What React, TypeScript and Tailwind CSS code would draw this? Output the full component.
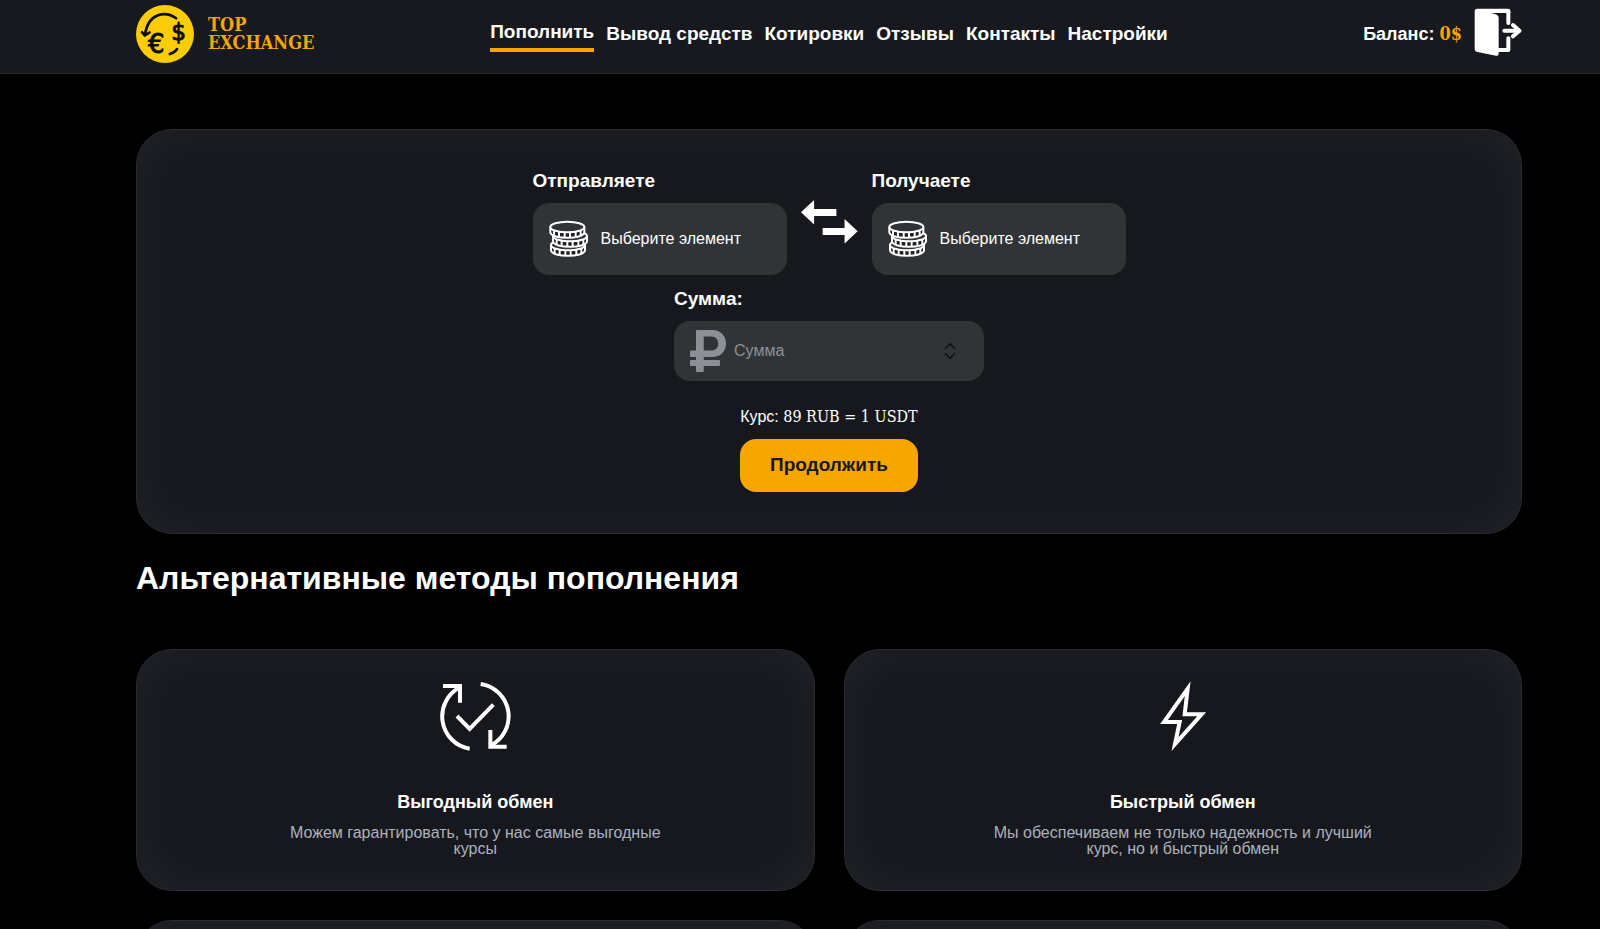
import React, { useState } from 'react';
import { FaRubleSign } from 'react-icons/fa';
import { ChevronDown, ChevronUp } from 'lucide-react';

interface NavItem {
  label: string;
  href: string;
}

interface Feature {
  title: string;
  text: string;
  icon: React.ReactNode;
}

const LogoIcon = () => (
  <svg className="w-[58px] h-[58px]" viewBox="47 13 175 175" fill="none" stroke="#0c0d10" strokeWidth="8" strokeLinecap="round" strokeLinejoin="round">
    <circle cx="134.5" cy="100.5" r="87.5" fill="#fccc06" stroke="none" />
    <path d="M168 53C138 31 84 34 74 103" />
    <path d="M65 95L74 105L88 96" />
    <path d="M149 161C158 159 166 153 171 146" />
    <g fill="#0c0d10" strokeWidth="3" fontWeight="400" fontFamily="DejaVu Sans, sans-serif">
      <text x="83" y="158" fontSize="78">€</text>
      <text x="153" y="119" fontSize="70">$</text>
    </g>
  </svg>
);

const ExitIcon = () => (
  <svg className="w-12 h-12" viewBox="404 22 144 144" fill="none" stroke="#fff" strokeWidth="12" strokeLinejoin="round">
    <path d="M406 32Q406 24 414 24H506Q513 24 513 31V37H454Q478 41 478 50V160Q478 167 470 165L411 153Q406 152 406 146Z" fill="#fff" stroke="none" />
    <path d="M507 32V67M507 113V148H478" strokeLinecap="round" />
    <path d="M495 90H540" strokeLinecap="round" />
    <path d="M521 73L540 90L521 107" strokeLinecap="round" />
  </svg>
);

// One coin of the stack, (x, y) is the centre of its top face
const Coin: React.FC<{ x: number; y: number }> = ({ x, y }) => (
  <g transform={`translate(${x} ${y})`} stroke="#fff" strokeWidth="6">
    <path d="M-51 0V16C-48 38 48 38 51 16V0" fill="#1d1f23" />
    <path d="M-40 9V26M-25 12V29M-8 14V32M8 14V32M25 12V29M40 9V26" />
    <ellipse rx="51" ry="16" fill="#313437" />
  </g>
);

const CoinsIcon = () => (
  <svg className="w-10 h-[38px] shrink-0" viewBox="115 182 120 114" fill="none">
    <Coin x={172} y={257} />
    <Coin x={178} y={230} />
    <Coin x={170} y={203} />
  </svg>
);

const SwapIcon = () => (
  <svg className="w-[57px] h-11" viewBox="60 120 174 134" fill="#fff">
    <path d="M60 157L100 120V147H168V169H100V195Z" />
    <path d="M233 215L193 178V205H126V227H193V253Z" />
  </svg>
);

const RefreshCheckIcon = () => (
  <svg className="w-[72px] h-[72px]" viewBox="508 60 216 216" fill="none" stroke="#fff" strokeWidth="12">
    <path d="M571 82A98 98 0 0 0 600 266" />
    <path d="M633 72A98 98 0 0 1 662 257" />
    <path d="M520 78H571V128" />
    <path d="M662 210V260H711" />
    <path d="M562 168L600 207L671 134" />
  </svg>
);

const BoltIcon = () => (
  <svg className="w-[72px] h-[72px]" viewBox="530 60 216 216" fill="none" stroke="#fff" strokeWidth="12" strokeMiterlimit="10">
    <path d="M652 86L581 186H628L614 252L694 163H643L652 86Z" />
  </svg>
);

const navItems: NavItem[] = [
  { label: 'Пополнить', href: '#deposit' },
  { label: 'Вывод средств', href: '#withdraw' },
  { label: 'Котировки', href: '#quotes' },
  { label: 'Отзывы', href: '#reviews' },
  { label: 'Контакты', href: '#contacts' },
  { label: 'Настройки', href: '#settings' }
];

const features: Feature[] = [
  {
    title: 'Выгодный обмен',
    text: 'Можем гарантировать, что у нас самые выгодные курсы',
    icon: <RefreshCheckIcon />
  },
  {
    title: 'Быстрый обмен',
    text: 'Мы обеспечиваем не только надежность и лучший курс, но и быстрый обмен',
    icon: <BoltIcon />
  }
];

const Card: React.FC<{ className?: string; children?: React.ReactNode }> = ({ className = '', children }) => (
  <div
    className={`rounded-[36px] border border-[#2b2c30] bg-[#17181d] shadow-[inset_0_0_60px_rgba(255,255,255,0.05)] ${className}`}
  >
    {children}
  </div>
);

const CurrencySelect: React.FC<{ id: string; label: string }> = ({ id, label }) => (
  <div className="flex flex-col gap-3">
    <label htmlFor={id} className="text-[19px] leading-5 font-bold">{label}</label>
    <div className="flex items-center gap-3 w-[254px] h-[72px] px-4 rounded-2xl bg-[#313437]">
      <CoinsIcon />
      <select id={id} className="flex-1 min-w-0 appearance-none bg-transparent text-base outline-none">
        <option>Выберите элемент</option>
      </select>
    </div>
  </div>
);

const Header = () => (
  <header className="bg-[#17191e] border-b border-[#2a2b2e]">
    <div className="grid grid-cols-[1fr_auto_1fr] items-center h-[73px] pb-[6px] pl-[136px] pr-[78px]">
      <a href="#home" className="flex items-center gap-[14px] font-['DejaVu_Serif_Condensed','DejaVu_Serif',serif] font-bold text-lg leading-[18px] text-[#f7a600]">
        <LogoIcon />
        <span>
          TOP
          <br />
          EXCHANGE
        </span>
      </a>
      <nav className="flex items-center gap-3 text-[19px] leading-6 font-bold">
        {navItems.map((item, index) => (
          <a
            key={item.href}
            href={item.href}
            className={index === 0 ? 'border-b-4 border-[#f7a600] py-1' : ''}
          >
            {item.label}
          </a>
        ))}
      </nav>
      <div className="flex items-center justify-end gap-3">
        <span className="text-lg leading-6 font-bold">
          Баланс:{' '}
          <span className="font-['DejaVu_Serif_Condensed','DejaVu_Serif',serif] text-[#f7a600]">0$</span>
        </span>
        <button className="pb-1" aria-label="Выйти">
          <ExitIcon />
        </button>
      </div>
    </div>
  </header>
);

const ExchangeForm = () => {
  const [amount, setAmount] = useState('');

  const step = (delta: number) => setAmount(value => String(Math.max(0, Number(value) + delta)));

  return (
    <Card className="py-[41px]">
      <form className="flex flex-col items-center" onSubmit={e => e.preventDefault()}>
        <div className="flex gap-[14px]">
          <CurrencySelect id="send" label="Отправляете" />
          <button type="button" className="self-start pt-[29px]" aria-label="Поменять местами">
            <SwapIcon />
          </button>
          <CurrencySelect id="receive" label="Получаете" />
        </div>

        <div className="flex flex-col gap-3 mt-[14px]">
          <label htmlFor="amount" className="text-[19px] leading-5 font-bold">Сумма:</label>
          <div className="flex items-center w-[310px] h-[60px] pl-4 pr-7 rounded-2xl bg-[#313437]">
            <FaRubleSign className="w-9 h-12 shrink-0 text-[#8c9096]" />
            <input
              id="amount"
              type="text"
              inputMode="numeric"
              placeholder="Сумма"
              value={amount}
              onChange={e => setAmount(e.target.value)}
              className="flex-1 min-w-0 pl-2 bg-transparent text-base outline-none placeholder:text-[#8c9096]"
            />
            <div className="flex flex-col text-[#0c0d10]">
              <button type="button" aria-label="Больше" onClick={() => step(1)}>
                <ChevronUp className="w-3 h-1.5" viewBox="5 8 14 8" />
              </button>
              <button type="button" aria-label="Меньше" className="pt-1" onClick={() => step(-1)}>
                <ChevronDown className="w-3 h-1.5" viewBox="5 8 14 8" />
              </button>
            </div>
          </div>
        </div>

        <p className="mt-[26px] text-base leading-5">
          Курс: <span className="font-['DejaVu_Serif_Condensed','DejaVu_Serif',serif]">89 RUB = 1 USDT</span>
        </p>
        <button type="submit" className="mt-3 h-[53px] px-[30px] rounded-2xl bg-[#f7a600] text-[19px] font-bold text-[#17181d]">
          Продолжить
        </button>
      </form>
    </Card>
  );
};

const App: React.FC = () => (
  <div className="h-screen overflow-hidden bg-black text-white font-['Liberation_Sans',Arial,sans-serif]">
    <Header />
    <main className="pt-[55px] pl-[136px] pr-[78px]">
      <ExchangeForm />

      <h1 className="mt-6 text-[32px] leading-10 font-bold">Альтернативные методы пополнения</h1>

      <div className="grid grid-cols-2 gap-[29px] mt-[51px]">
        {features.map(feature => (
          <Card key={feature.title} className="flex flex-col items-center h-[242px] pt-[30px] text-center">
            {feature.icon}
            <h2 className="mt-10 text-lg leading-5 font-bold">{feature.title}</h2>
            <p className="mt-[13px] max-w-[400px] text-base leading-4 text-[#abb2bd]">{feature.text}</p>
          </Card>
        ))}
        <Card className="h-[242px]" />
        <Card className="h-[242px]" />
      </div>
    </main>
  </div>
);

export default App;
